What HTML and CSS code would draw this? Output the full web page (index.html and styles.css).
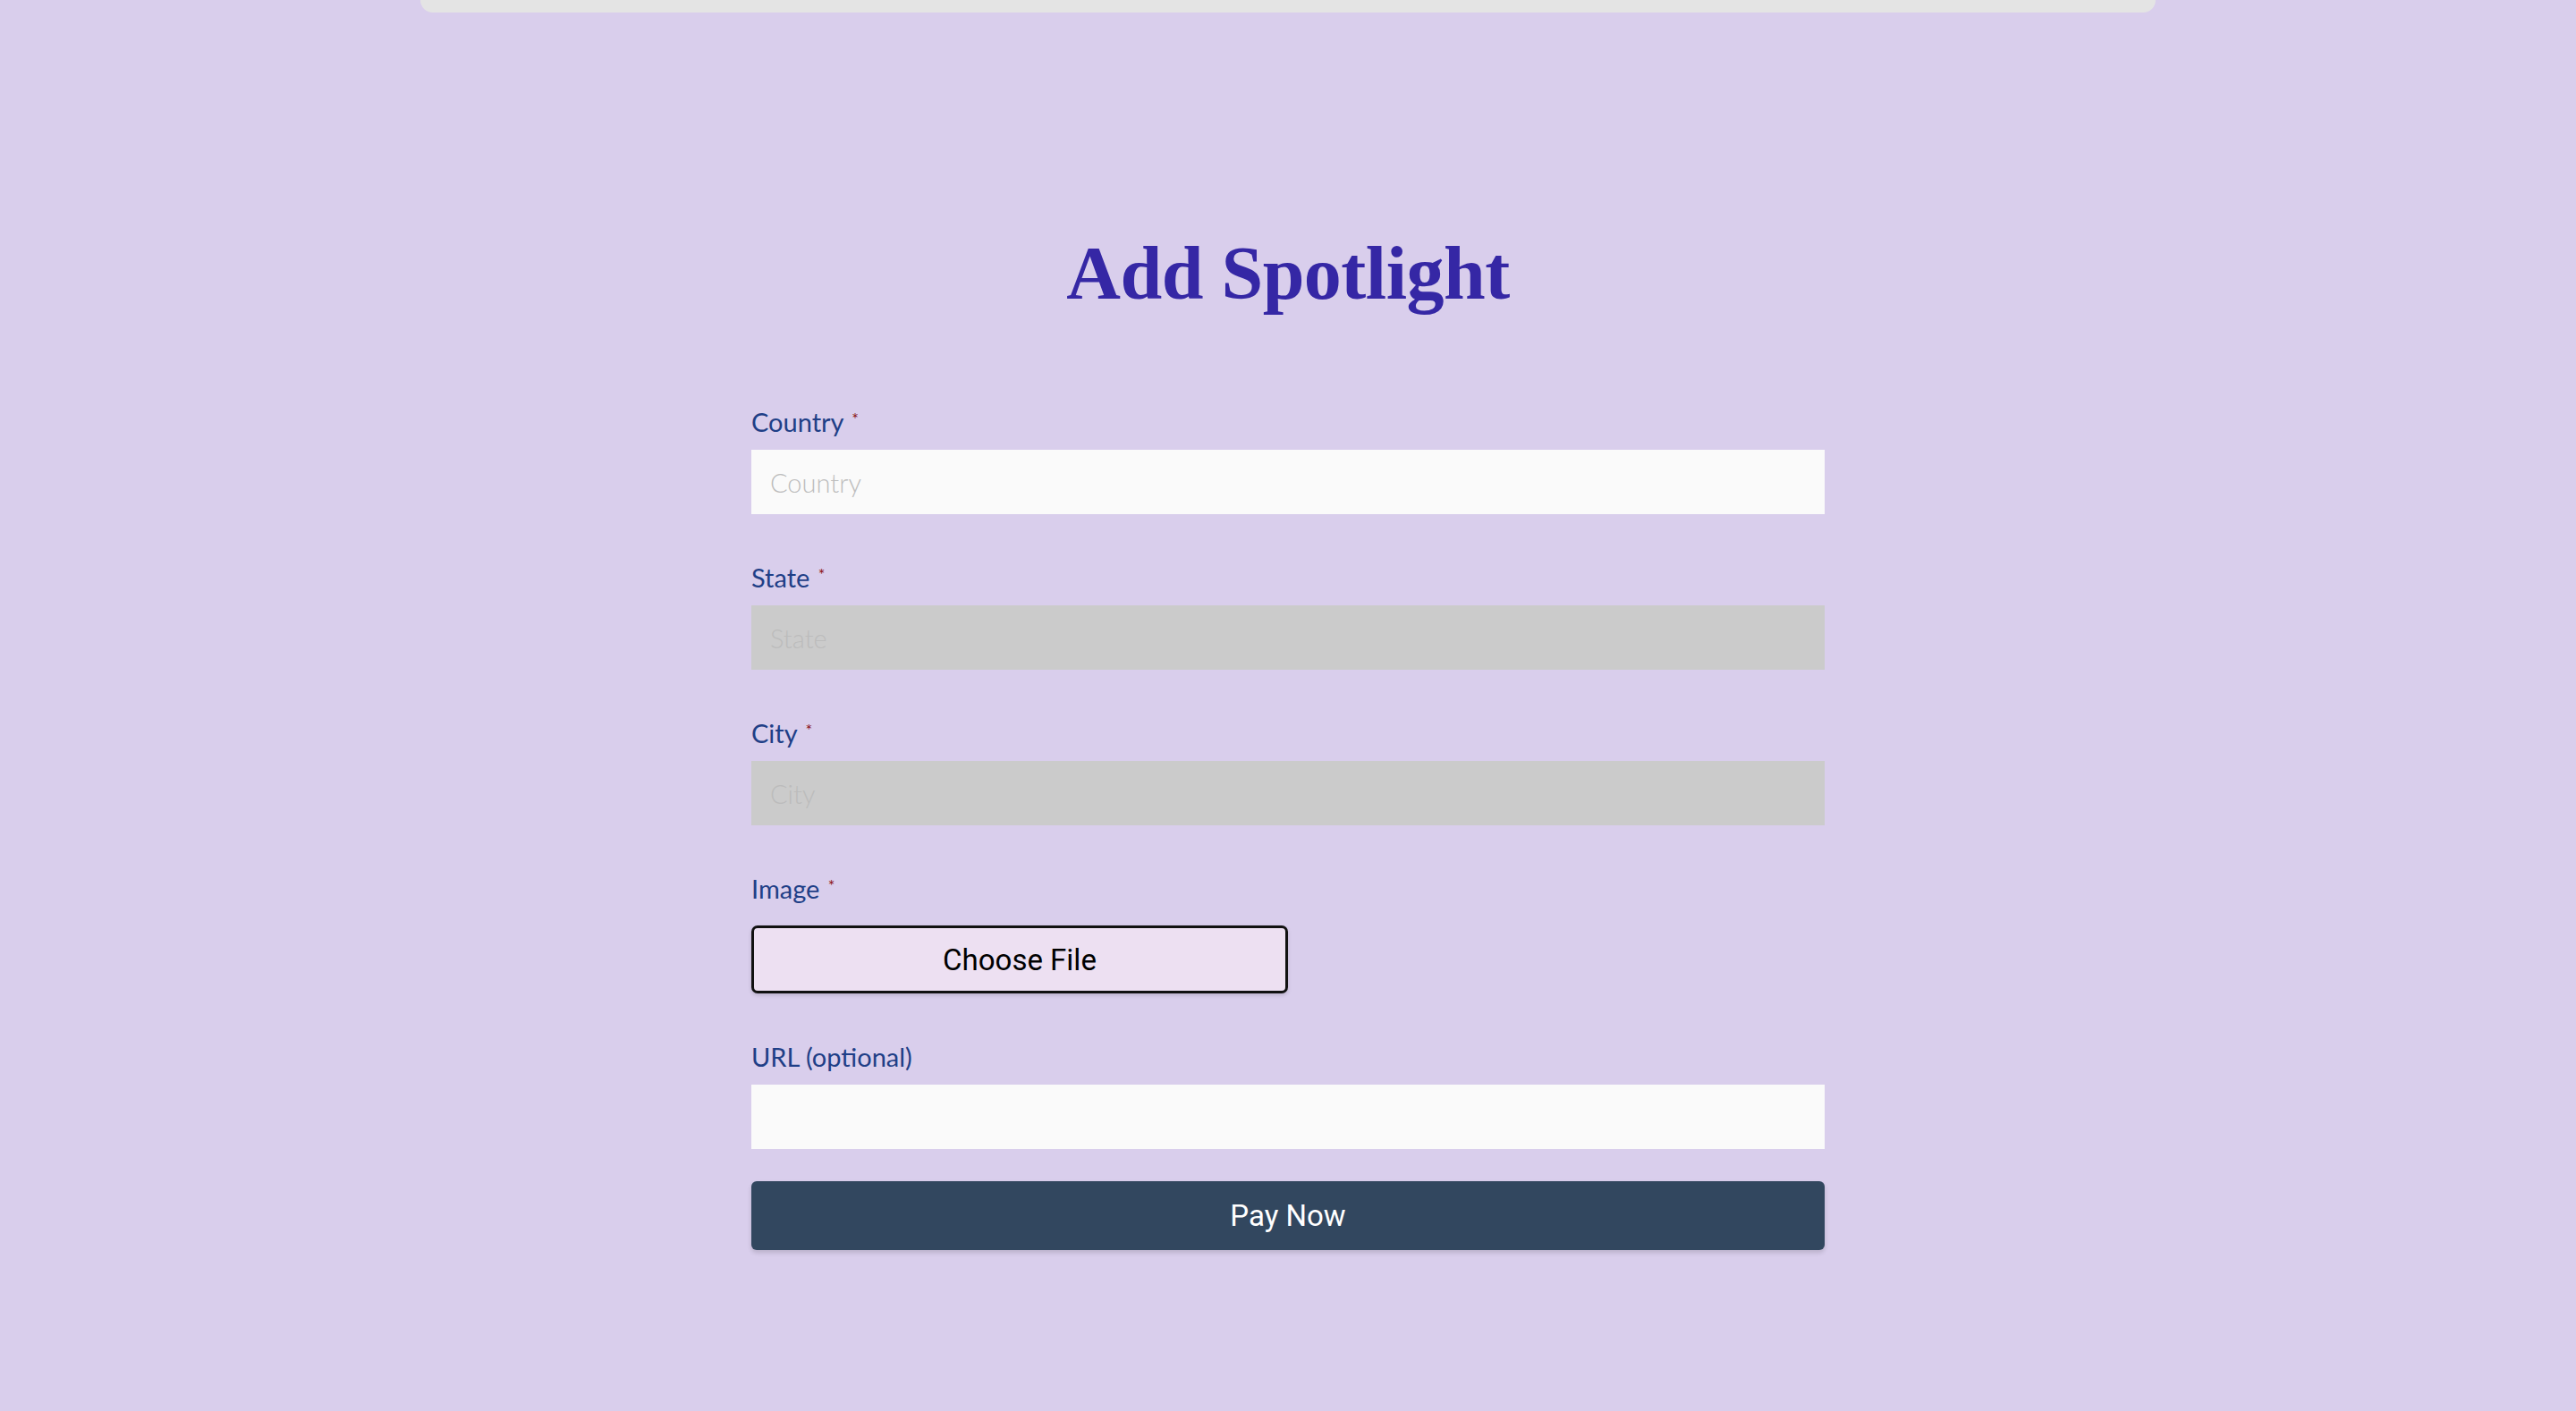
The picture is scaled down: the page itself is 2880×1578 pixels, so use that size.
FILE: index.html
```html
<!DOCTYPE html>
<html lang="en">
<head>
<meta charset="utf-8">
<title>Add Spotlight</title>
<link rel="stylesheet" href="styles.css">
</head>
<body>
<div class="topbar"></div>
<main class="page">
  <h1 class="title">Add Spotlight</h1>
  <form class="form">
    <div class="field">
      <label class="label">Country <span class="req">*</span></label>
      <input class="input" type="text" placeholder="Country">
    </div>
    <div class="field">
      <label class="label">State <span class="req">*</span></label>
      <input class="input input-disabled" type="text" placeholder="State" disabled>
    </div>
    <div class="field">
      <label class="label">City <span class="req">*</span></label>
      <input class="input input-disabled" type="text" placeholder="City" disabled>
    </div>
    <div class="field field-file">
      <label class="label">Image <span class="req">*</span></label>
      <button type="button" class="file-btn">Choose File</button>
    </div>
    <div class="field">
      <label class="label">URL (optional)</label>
      <input class="input" type="text">
    </div>
    <button type="button" class="pay-btn">Pay Now</button>
  </form>
</main>
</body>
</html>
```

FILE: styles.css
```css
html, body {
  margin: 0;
  padding: 0;
}
body {
  background: #d9ceec;
  min-height: 1578px;
  font-family: "Lato", "Open Sans", sans-serif;
}
.topbar {
  width: 1940px;
  height: 14px;
  margin: 0 auto;
  background: #e4e4e4;
  border-radius: 0 0 18px 18px;
}
.page {
  width: 1200px;
  margin: 0 auto;
}
.title {
  margin: 256px 0 0;
  text-align: center;
  font-family: "Liberation Serif", "DejaVu Serif", serif;
  font-weight: 700;
  font-size: 84px;
  line-height: 72px;
  color: #3527a5;
  letter-spacing: -0.5px;
}
.form {
  display: flex;
  flex-direction: column;
  margin-top: 113px;
}
.field {
  display: flex;
  flex-direction: column;
  gap: 14px;
  margin-bottom: 54px;
}
.field-file {
  gap: 24px;
  margin-bottom: 54px;
  align-items: flex-start;
}
.label {
  font-family: "Lato", "Open Sans", sans-serif;
  font-size: 29px;
  line-height: 34px;
  color: #1f3f87;
}
.req {
  color: #8b1010;
  font-size: 18px;
  vertical-align: top;
  line-height: 26px;
  margin-left: 2px;
}
.input {
  box-sizing: border-box;
  width: 1200px;
  height: 72px;
  border: none;
  outline: none;
  background: #fafafa;
  padding: 0 21px;
  font-family: "Lato", "Open Sans", sans-serif;
  font-size: 29px;
  color: #333;
}
.input::placeholder {
  color: #bdbdbd;
  font-weight: 300;
}
.input-disabled {
  background: #cbcbcb;
}
.input-disabled::placeholder {
  color: #bcbcbc;
}
.file-btn {
  box-sizing: border-box;
  width: 600px;
  height: 76px;
  border: 3px solid #111;
  border-radius: 7px;
  background: #ede0f2;
  color: #000;
  font-family: "Roboto", "Inter", sans-serif;
  font-size: 33px;
  box-shadow: 0 2px 4px rgba(0, 0, 0, 0.15);
  padding: 0;
}
.pay-btn {
  margin-top: -18px;
  width: 1200px;
  height: 77px;
  border: none;
  border-radius: 6px;
  background: #32475f;
  color: #fff;
  font-family: "Roboto", "Inter", sans-serif;
  font-size: 33px;
  box-shadow: 0 3px 5px rgba(0, 0, 0, 0.15);
}
```
